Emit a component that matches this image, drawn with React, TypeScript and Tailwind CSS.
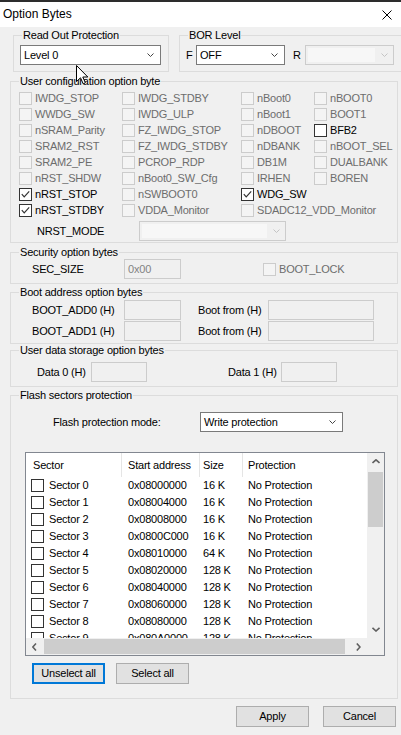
import { ReactNode } from 'react';

type Opt = { label: string; checked?: boolean; enabled?: boolean } | null;

const userRows: Opt[][] = [
  [{ label: 'IWDG_STOP' }, { label: 'IWDG_STDBY' }, { label: 'nBoot0' }, { label: 'nBOOT0' }],
  [{ label: 'WWDG_SW' }, { label: 'IWDG_ULP' }, { label: 'nBoot1' }, { label: 'BOOT1' }],
  [{ label: 'nSRAM_Parity' }, { label: 'FZ_IWDG_STOP' }, { label: 'nDBOOT' }, { label: 'BFB2', enabled: true }],
  [{ label: 'SRAM2_RST' }, { label: 'FZ_IWDG_STDBY' }, { label: 'nDBANK' }, { label: 'nBOOT_SEL' }],
  [{ label: 'SRAM2_PE' }, { label: 'PCROP_RDP' }, { label: 'DB1M' }, { label: 'DUALBANK' }],
  [{ label: 'nRST_SHDW' }, { label: 'nBoot0_SW_Cfg' }, { label: 'IRHEN' }, { label: 'BOREN' }],
  [{ label: 'nRST_STOP', checked: true, enabled: true }, { label: 'nSWBOOT0' }, { label: 'WDG_SW', checked: true, enabled: true }, null],
  [{ label: 'nRST_STDBY', checked: true, enabled: true }, { label: 'VDDA_Monitor' }, { label: 'SDADC12_VDD_Monitor' }, null],
];

const sectors = [
  ['Sector 0', '0x08000000', '16 K'],
  ['Sector 1', '0x08004000', '16 K'],
  ['Sector 2', '0x08008000', '16 K'],
  ['Sector 3', '0x0800C000', '16 K'],
  ['Sector 4', '0x08010000', '64 K'],
  ['Sector 5', '0x08020000', '128 K'],
  ['Sector 6', '0x08040000', '128 K'],
  ['Sector 7', '0x08060000', '128 K'],
  ['Sector 8', '0x08080000', '128 K'],
  ['Sector 9', '0x080A0000', '128 K'],
];

function Chevron({ disabled }: { disabled?: boolean }) {
  return (
    <svg width="7" height="4" viewBox="0 0 7 4" className={disabled ? 'stroke-[#c4c4c4]' : 'stroke-[#444444]'}>
      <polyline points="0.5,0.5 3.5,3.5 6.5,0.5" fill="none" strokeWidth="1" />
    </svg>
  );
}

function ScrollArrow({ dir }: { dir: 'up' | 'down' | 'left' | 'right' }) {
  const pts = {
    up: '0.5,4 4,0.8 7.5,4',
    down: '0.5,0.8 4,4 7.5,0.8',
    left: '4,0.5 0.8,4 4,7.5',
    right: '0.8,0.5 4,4 0.8,7.5',
  }[dir];
  const vertical = dir === 'up' || dir === 'down';
  return (
    <svg
      width={vertical ? 8 : 5}
      height={vertical ? 5 : 8}
      viewBox={vertical ? '0 0 8 5' : '0 0 5 8'}
      className="stroke-[#606060]"
    >
      <polyline points={pts} fill="none" strokeWidth="1.6" />
    </svg>
  );
}

function Tick() {
  return (
    <svg width="11" height="11" viewBox="0 0 11 11" className="stroke-[#333333]">
      <polyline points="1.8,5.2 4.2,7.8 9.2,2.4" fill="none" strokeWidth="1.2" />
    </svg>
  );
}

function Box({ checked, enabled }: { checked?: boolean; enabled?: boolean }) {
  return (
    <span
      className={`flex h-[13px] w-[13px] shrink-0 items-center justify-center border ${
        enabled ? 'border-[#333333] bg-white' : 'border-[#cccccc] bg-[#f4f4f4]'
      }`}
    >
      {checked && <Tick />}
    </span>
  );
}

function Check({ opt }: { opt: Opt }) {
  if (!opt) return <div className="h-[16px]" />;
  return (
    <div className="flex h-[16px] items-center whitespace-nowrap">
      <Box checked={opt.checked} enabled={opt.enabled} />
      <span className={`ml-[3px] ${opt.enabled ? 'text-black' : 'text-[#6d6d6d]'}`}>{opt.label}</span>
    </div>
  );
}

function Combo({ value, width, disabled }: { value?: string; width: string; disabled?: boolean }) {
  if (disabled) {
    return (
      <div className={`flex h-[20px] shrink-0 items-center border border-[#cccccc] bg-[#f0f0f0] ${width}`}>
        <div className="m-[2px] h-[14px] flex-1 bg-[#f7f7f7]" />
        <div className="flex w-[16px] justify-center pr-[2px]">
          <Chevron disabled />
        </div>
      </div>
    );
  }
  return (
    <div className={`flex h-[20px] shrink-0 items-center border border-[#7a7a7a] bg-white ${width}`}>
      <span className="flex-1 pl-[3px]">{value}</span>
      <div className="flex w-[16px] justify-center pr-[3px]">
        <Chevron />
      </div>
    </div>
  );
}

function Field({ value, width }: { value?: string; width: string }) {
  return (
    <div className={`flex h-[20px] shrink-0 items-center border border-[#cccccc] bg-[#f0f0f0] pl-[3px] text-[#838383] ${width}`}>
      {value}
    </div>
  );
}

function GroupBox({ title, className, children }: { title: string; className: string; children?: ReactNode }) {
  return (
    <div className={`shrink-0 border border-[#dcdcdc] ${className}`}>
      <div className="-mt-[7px] ml-[8px] w-fit bg-[#f0f0f0] px-[1px] leading-[13px] whitespace-nowrap">{title}</div>
      {children}
    </div>
  );
}

function Button({ label, focused }: { label: string; focused?: boolean }) {
  return (
    <button
      type="button"
      className={`flex h-[21px] w-[73px] shrink-0 items-center justify-center bg-[#e1e1e1] text-black ${
        focused ? 'border-2 border-[#0078d7]' : 'border border-[#adadad]'
      }`}
    >
      {label}
    </button>
  );
}

export default function App() {
  return (
    <div className="relative h-[735px] w-[401px] overflow-hidden bg-[#f0f0f0] font-['Liberation_Sans',Arial,sans-serif] text-[11px] leading-[13px] tracking-[-0.2px] text-black">
      {/* title bar */}
      <div className="flex h-[27px] items-center justify-between border-t-2 border-[#2d2d2d] bg-white pl-[3px] pr-[9px]">
        <span className="text-[12px] tracking-normal">Option Bytes</span>
        <svg width="10" height="10" viewBox="0 0 10 10" className="stroke-black">
          <line x1="0.5" y1="0.5" x2="9.5" y2="9.5" strokeWidth="1" />
          <line x1="9.5" y1="0.5" x2="0.5" y2="9.5" strokeWidth="1" />
        </svg>
      </div>

      {/* read out protection + BOR */}
      <div className="mt-[8px] flex">
        <GroupBox title="Read Out Protection" className="ml-[13px] h-[37px] w-[156px]">
          <div className="ml-[6px] mt-[3px]">
            <Combo value="Level 0" width="w-[141px]" />
          </div>
        </GroupBox>
        <GroupBox title="BOR Level" className="ml-[10px] h-[37px] w-[240px]">
          <div className="mt-[3px] flex items-center pl-[6px]">
            <span className="w-[10px]">F</span>
            <Combo value="OFF" width="w-[89px]" />
            <span className="ml-[8px] w-[12px]">R</span>
            <Combo width="w-[89px]" disabled />
          </div>
        </GroupBox>
      </div>

      {/* user configuration */}
      <GroupBox title="User configuration option byte" className="ml-[10px] mt-[9px] h-[162px] w-[388px]">
        <div className="mt-[2px] grid grid-cols-[103px_119px_73px_1fr] pl-[8px]">
          {userRows.flat().map((o, i) => (
            <Check key={i} opt={o} />
          ))}
        </div>
        <div className="mt-[3px] flex items-center pl-[26px]">
          <span className="w-[102px]">NRST_MODE</span>
          <Combo width="w-[147px]" disabled />
        </div>
      </GroupBox>

      {/* security */}
      <GroupBox title="Security option bytes" className="ml-[10px] mt-[9px] h-[32px] w-[388px]">
        <div className="flex h-[20px] items-center pl-[21px]">
          <span className="w-[92px]">SEC_SIZE</span>
          <Field value="0x00" width="w-[57px]" />
          <div className="ml-[82px]">
            <Check opt={{ label: 'BOOT_LOCK' }} />
          </div>
        </div>
      </GroupBox>

      {/* boot address */}
      <GroupBox title="Boot address option bytes" className="ml-[10px] mt-[8px] h-[52px] w-[388px]">
        <div className="mt-[1px] flex flex-col gap-[1px] pl-[21px]">
          {['BOOT_ADD0 (H)', 'BOOT_ADD1 (H)'].map((l) => (
            <div key={l} className="flex h-[20px] items-center">
              <span className="w-[92px]">{l}</span>
              <Field width="w-[57px]" />
              <span className="ml-[17px] w-[70px]">Boot from (H)</span>
              <Field width="w-[106px]" />
            </div>
          ))}
        </div>
      </GroupBox>

      {/* user data */}
      <GroupBox title="User data storage option bytes" className="ml-[10px] mt-[6px] h-[37px] w-[388px]">
        <div className="mt-[5px] flex h-[20px] items-center pl-[26px]">
          <span className="w-[54px]">Data 0 (H)</span>
          <Field width="w-[56px]" />
          <span className="ml-[81px] w-[53px]">Data 1 (H)</span>
          <Field width="w-[56px]" />
        </div>
      </GroupBox>

      {/* flash sectors */}
      <GroupBox title="Flash sectors protection" className="ml-[10px] mt-[8px] h-[304px] w-[388px]">
        <div className="mt-[10px] flex items-center pl-[42px]">
          <span className="w-[147px]">Flash protection mode:</span>
          <Combo value="Write protection" width="w-[143px]" />
        </div>

        <div className="ml-[14px] mt-[20px] flex h-[204px] w-[360px] flex-col border border-[#828790] bg-white">
          <div className="flex h-[185px]">
            <div className="flex-1 overflow-hidden">
              <div className="flex h-[24px] items-center whitespace-nowrap">
                <div className="w-[95px] pl-[7px]">Sector</div>
                <div className="flex h-full w-[78px] items-center border-l border-[#e5e5e5] pl-[6px]">Start address</div>
                <div className="flex h-full w-[43px] items-center border-l border-[#e5e5e5] pl-[3px]">Size</div>
                <div className="flex h-full flex-1 items-center border-l border-[#e5e5e5] pl-[5px]">Protection</div>
              </div>
              {sectors.map(([name, addr, size]) => (
                <div key={name} className="flex h-[17px] items-center whitespace-nowrap">
                  <div className="flex w-[95px] items-center pl-[5px]">
                    <Box enabled />
                    <span className="ml-[5px]">{name}</span>
                  </div>
                  <div className="w-[78px] pl-[7px]">{addr}</div>
                  <div className="w-[43px] pl-[4px]">{size}</div>
                  <div className="flex-1 pl-[6px]">No Protection</div>
                </div>
              ))}
            </div>
            <div className="flex w-[17px] flex-col bg-[#f0f0f0]">
              <div className="flex h-[17px] items-center justify-center">
                <ScrollArrow dir="up" />
              </div>
              <div className="mx-[1px] mt-[2px] h-[55px] bg-[#cdcdcd]" />
              <div className="flex-1" />
              <div className="flex h-[17px] items-center justify-center">
                <ScrollArrow dir="down" />
              </div>
            </div>
          </div>
          <div className="flex h-[17px] bg-[#f0f0f0]">
            <div className="flex w-[17px] items-center justify-center">
              <ScrollArrow dir="left" />
            </div>
            <div className="my-[1px] ml-[1px] w-[301px] bg-[#cdcdcd]" />
            <div className="flex-1" />
            <div className="flex w-[17px] items-center justify-center">
              <ScrollArrow dir="right" />
            </div>
            <div className="w-[17px]" />
          </div>
        </div>

        <div className="ml-[21px] mt-[7px] flex gap-[11px]">
          <Button label="Unselect all" focused />
          <Button label="Select all" />
        </div>
      </GroupBox>

      {/* dialog buttons */}
      <div className="mt-[7px] flex justify-end gap-[14px] pr-[5px]">
        <Button label="Apply" />
        <Button label="Cancel" />
      </div>

      {/* mouse pointer */}
      <svg width="13" height="20" viewBox="0 0 13 20" className="absolute left-[76px] top-[65px]">
        <path
          d="M0.5 0.5 L0.5 16.5 L4.5 12.8 L7.2 18.8 L9.4 17.8 L6.8 12 L11.8 12 Z"
          fill="white"
          stroke="black"
          strokeWidth="1"
          strokeLinejoin="round"
        />
      </svg>
    </div>
  );
}
